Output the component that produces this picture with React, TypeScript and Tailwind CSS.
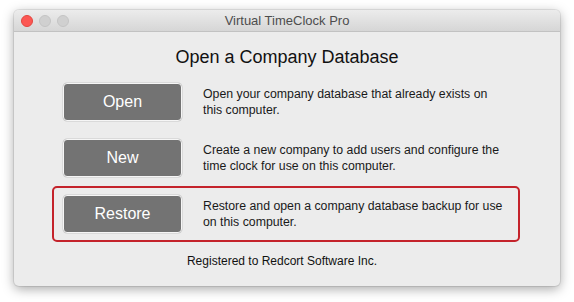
const rows = [
  { label: 'Open', text: 'Open your company database that already exists on this computer.' },
  { label: 'New', text: 'Create a new company to add users and configure the time clock for use on this computer.' },
  { label: 'Restore', text: 'Restore and open a company database backup for use on this computer.' },
];

function Row({ label, text, marked }: { label: string; text: string; marked?: boolean }) {
  return (
    <div
      className={
        'flex items-center gap-[21px] rounded-[5px] border-2 py-[7px] pl-[9px] ' +
        (marked ? 'border-[#c4232b]' : 'border-transparent')
      }
    >
      <button
        type="button"
        className="h-[38px] w-[119px] shrink-0 rounded-[4px] border border-[#f6f6f6] bg-[#737373] text-[16px] text-white shadow-[0_0_0_0.5px_#c8c8c8]"
      >
        {label}
      </button>
      <p className="w-[303px] text-[12.3px] leading-[16px] text-[#1a1a1a]">{text}</p>
    </div>
  );
}

export default function App() {
  return (
    <div
      className="h-[302px] w-[574px] bg-white pl-[14px] pt-[10px]"
      style={{ fontFamily: '"Liberation Sans", Arial, sans-serif' }}
    >
      <div className="flex h-[276px] w-[546px] flex-col overflow-hidden rounded-[5px] bg-[#ececec] shadow-[0_3px_12px_rgba(0,0,0,0.35),0_0_0_1px_rgba(0,0,0,0.08)]">
        <div className="relative flex h-[22px] shrink-0 items-center justify-center border-b border-[#c2c2c2] bg-gradient-to-b from-[#ececec] to-[#d6d6d6]">
          <div className="absolute left-[7px] top-[5px] flex gap-[6px]">
            <span className="h-[12px] w-[12px] rounded-full border border-[#e2463f] bg-[#fc5753]" />
            <span className="h-[12px] w-[12px] rounded-full border border-[#c4c4c4] bg-[#d0d0d0]" />
            <span className="h-[12px] w-[12px] rounded-full border border-[#c4c4c4] bg-[#d0d0d0]" />
          </div>
          <span className="text-[13px] text-[#4d4d4d]">Virtual TimeClock Pro</span>
        </div>
        <div className="flex flex-1 flex-col">
          <h1 className="mt-[14px] text-center text-[18px] leading-[22px] text-[#111]">Open a Company Database</h1>
          <div className="ml-[38px] mt-[6px] flex w-[468px] flex-col">
            {rows.map((r) => (
              <Row key={r.label} label={r.label} text={r.text} marked={r.label === 'Restore'} />
            ))}
          </div>
          <p className="mt-[10px] pr-[10px] text-center text-[12px] text-[#111]">Registered to Redcort Software Inc.</p>
        </div>
      </div>
    </div>
  );
}
